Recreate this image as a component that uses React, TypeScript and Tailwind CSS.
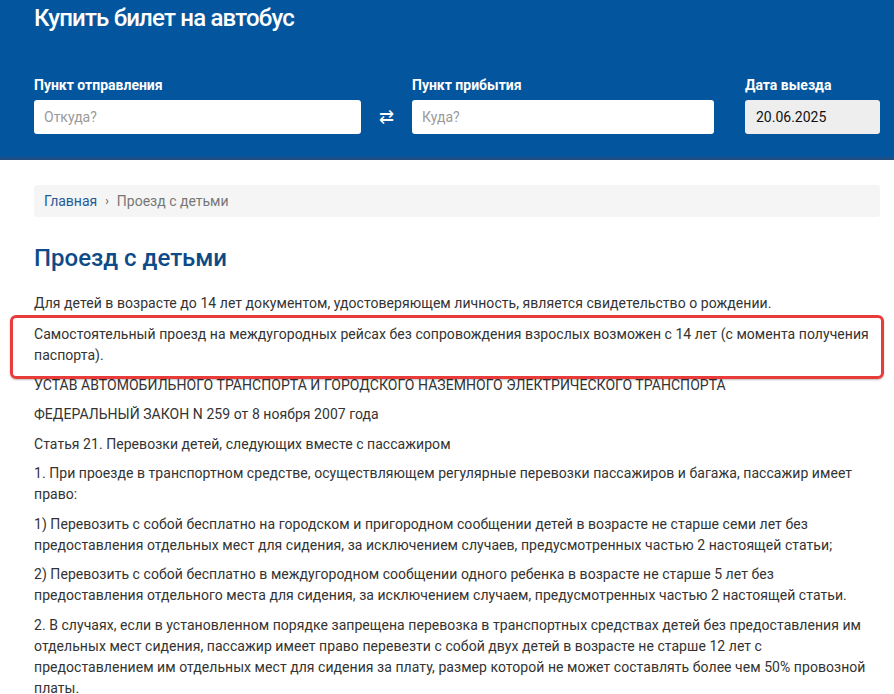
const paragraphs = [
  'УСТАВ АВТОМОБИЛЬНОГО ТРАНСПОРТА И ГОРОДСКОГО НАЗЕМНОГО ЭЛЕКТРИЧЕСКОГО ТРАНСПОРТА',
  'ФЕДЕРАЛЬНЫЙ ЗАКОН N 259 от 8 ноября 2007 года',
  'Статья 21. Перевозки детей, следующих вместе с пассажиром',
  '1. При проезде в транспортном средстве, осуществляющем регулярные перевозки пассажиров и багажа, пассажир имеет право:',
  '1) Перевозить с собой бесплатно на городском и пригородном сообщении детей в возрасте не старше семи лет без предоставления отдельных мест для сидения, за исключением случаев, предусмотренных частью 2 настоящей статьи;',
  '2) Перевозить с собой бесплатно в междугородном сообщении одного ребенка в возрасте не старше 5 лет без предоставления отдельного места для сидения, за исключением случаем, предусмотренных частью 2 настоящей статьи.',
  '2. В случаях, если в установленном порядке запрещена перевозка в транспортных средствах детей без предоставления им отдельных мест сидения, пассажир имеет право перевезти с собой двух детей в возрасте не старше 12 лет с предоставлением им отдельных мест для сидения за плату, размер которой не может составлять более чем 50% провозной платы.',
]

export default function App() {
  return (
    <div className="min-h-[694px] bg-white font-['Roboto','Liberation_Sans',sans-serif] overflow-hidden">
      <header className="bg-[#03569e] border-b-[3px] border-[#1d4f85] pl-[34px] pr-[14px] h-[160px]">
        <h2 className="text-white text-[24px] leading-[36px] font-medium tracking-[-0.8px]">Купить билет на автобус</h2>
        <div className="flex mt-[39px]">
          <div className="w-[327px]">
            <div className="text-white text-[14px] font-bold leading-[20px] mb-[5px]">Пункт отправления</div>
            <input placeholder="Откуда?" className="w-full h-[34px] bg-white rounded-[3px] px-[10px] text-[14px] placeholder:text-[#9a9a9a] outline-none" />
          </div>
          <div className="w-[51px] flex items-end justify-center pb-[7px]">
            <span className="text-white text-[18px] leading-[20px]">⇄</span>
          </div>
          <div className="w-[302px]">
            <div className="text-white text-[14px] font-bold leading-[20px] mb-[5px]">Пункт прибытия</div>
            <input placeholder="Куда?" className="w-full h-[34px] bg-white rounded-[3px] px-[10px] text-[14px] placeholder:text-[#9a9a9a] outline-none" />
          </div>
          <div className="w-[135px] ml-[31px]">
            <div className="text-white text-[14px] font-bold leading-[20px] mb-[5px]">Дата выезда</div>
            <div className="h-[34px] bg-[#eeeeee] rounded-[3px] px-[11px] text-[14px] text-[#111] flex items-center">20.06.2025</div>
          </div>
        </div>
      </header>

      <main className="pl-[34px] pr-[14px] text-[14px] text-[#333]">
        <nav className="mt-[25px] h-[32px] bg-[#f5f5f5] rounded-[3px] px-[10px] flex items-center gap-[8px]">
          <a className="text-[#1f5b99]">Главная</a>
          <span className="text-[#555] text-[12px]">›</span>
          <span className="text-[#777]">Проезд с детьми</span>
        </nav>

        <h1 className="mt-[24px] text-[#0d4a88] text-[24px] leading-[34px] font-medium">Проезд с детьми</h1>

        <div className="mt-[18px] leading-[21px] tracking-[0.05px]">
          <p className="mb-[10px]">Для детей в возрасте до 14 лет документом, удостоверяющем личность, является свидетельство о рождении.</p>
          <p className="mb-[8.5px] relative">
            Самостоятельный проезд на междугородных рейсах без сопровождения взрослых возможен с 14 лет (с момента получения паспорта).
            <span className="absolute left-[-24px] right-[-4px] top-[-9px] bottom-[-13px] border-[3px] border-[#ea3b3b] rounded-[6px] shadow-[0_1px_2px_rgba(0,0,0,0.25)]" />
          </p>
          {paragraphs.map(p => (
            <p key={p} className="mb-[8.5px]">{p}</p>
          ))}
        </div>
      </main>
    </div>
  )
}
